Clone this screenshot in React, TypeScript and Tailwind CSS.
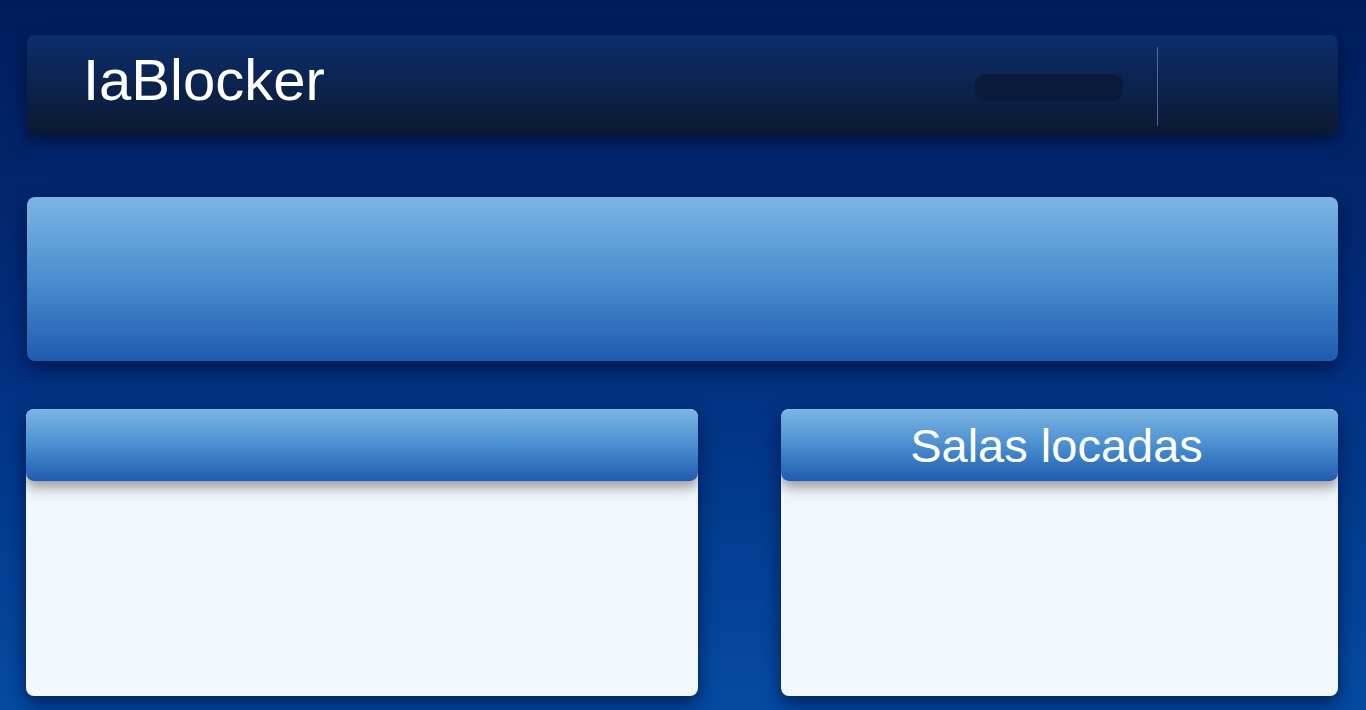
export default function App() {
  return (
    <div
      className="h-[710px] w-[1366px] overflow-hidden bg-gradient-to-b from-[#011c5a] via-[#022f7e] to-[#054ba2] px-[27px] pt-[35px] pr-[28px]"
      style={{ fontFamily: '"Liberation Sans", Arial, sans-serif' }}
    >
      <header className="flex h-[100px] items-center rounded-lg bg-gradient-to-b from-[#0b2e6d] to-[#0a1931] shadow-[0_6px_18px_rgba(0,8,40,0.6)]">
        <h1 className="mb-[10px] ml-[56px] text-[58px] leading-none text-white">IaBlocker</h1>
        <div className="ml-auto mr-[34px] mt-[4px] h-[27px] w-[148px] rounded-[10px] bg-[#091a3a]" />
        <div className="mr-[180px] mt-[2px] h-[79px] w-px bg-[#4d6a98]" />
      </header>

      <section className="mt-[62px] h-[164px] rounded-lg bg-gradient-to-b from-[#7cb5e2] via-[#4a8fd0] to-[#1f5bb0] shadow-[0_8px_18px_rgba(0,10,50,0.65)]" />

      <div className="mt-[48px] flex justify-between">
        <Card className="ml-[-1px] w-[672px]" />
        <Card className="w-[557px]" title="Salas locadas" />
      </div>
    </div>
  );
}

function Card({ className, title }: { className?: string; title?: string }) {
  return (
    <div
      className={`flex h-[287px] flex-col overflow-hidden rounded-lg bg-[#f2f7fb] shadow-[0_8px_18px_rgba(0,10,50,0.65)] ${className ?? ""}`}
    >
      <div className="relative z-10 flex h-[72px] shrink-0 items-center justify-center rounded-lg bg-gradient-to-b from-[#7cb5e2] via-[#4a8fd0] to-[#1f5bb0] shadow-[0_6px_14px_rgba(0,0,0,0.4)]">
        {title && <span className="mr-[6px] text-[47px] leading-none text-white">{title}</span>}
      </div>
      <div className="flex-1" />
    </div>
  );
}
